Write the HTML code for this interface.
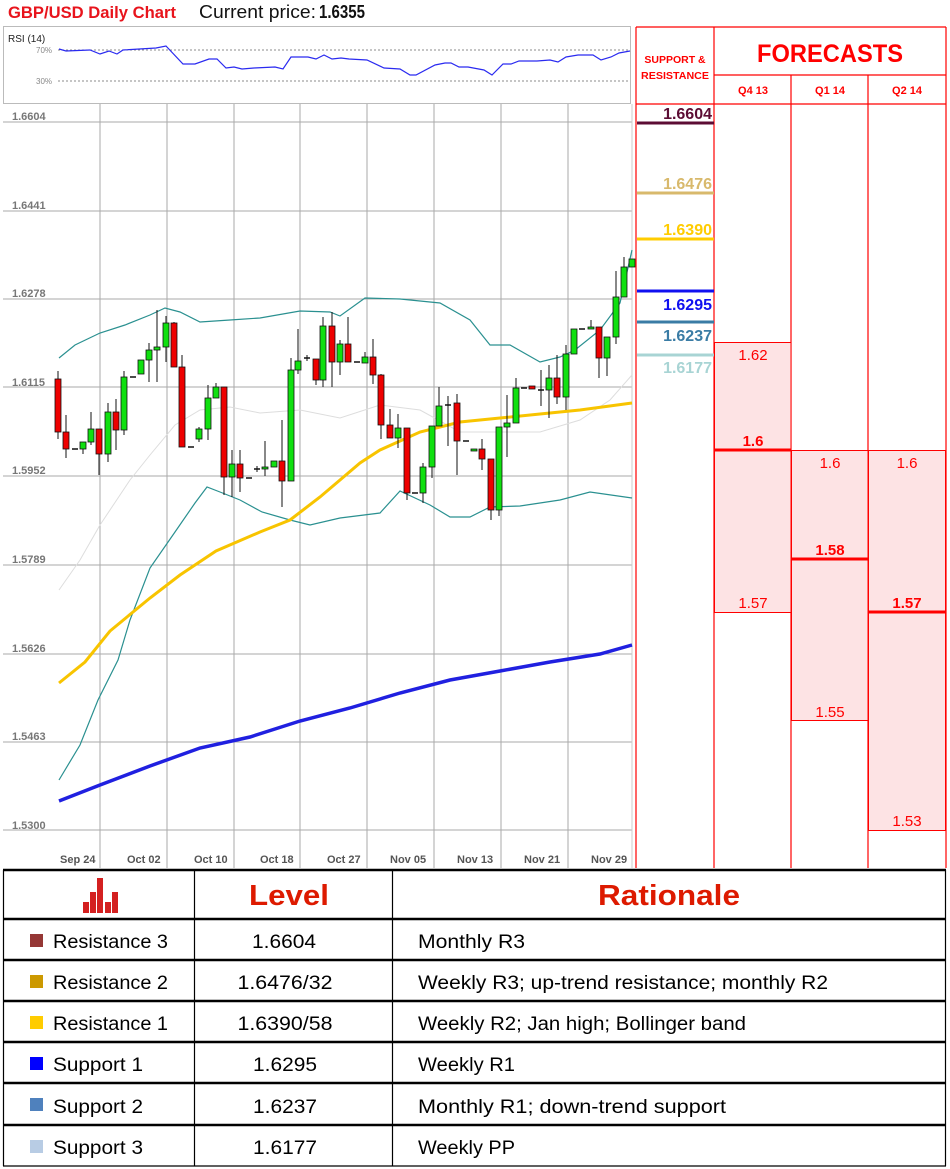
<!DOCTYPE html>
<html><head><meta charset="utf-8"><style>
html,body{margin:0;padding:0;background:#fff;}
svg{display:block;font-family:"Liberation Sans",sans-serif;}
</style></head><body>
<svg id="s" width="950" height="1169" viewBox="0 0 950 1169" xmlns="http://www.w3.org/2000/svg">
<rect width="950" height="1169" fill="#fff"/>
<text x="8" y="18" font-size="17" font-weight="bold" fill="#e8141c" textLength="168" lengthAdjust="spacingAndGlyphs">GBP/USD Daily Chart</text>
<text x="199" y="18" font-size="18" fill="#111" textLength="117" lengthAdjust="spacingAndGlyphs">Current price:</text>
<text x="319" y="18" font-size="18" font-weight="bold" fill="#111" textLength="46" lengthAdjust="spacingAndGlyphs">1.6355</text>
<rect x="3.5" y="26.5" width="627" height="77" fill="#fff" stroke="#bbb"/>
<text x="8" y="42" font-size="10" fill="#222">RSI (14)</text>
<text x="36" y="53" font-size="8" fill="#888">70%</text>
<text x="36" y="84" font-size="8" fill="#888">30%</text>
<line x1="58" y1="50" x2="630" y2="50" stroke="#666" stroke-dasharray="2,2" stroke-width="0.8"/>
<line x1="58" y1="81" x2="630" y2="81" stroke="#666" stroke-dasharray="2,2" stroke-width="0.8"/>
<polyline fill="none" stroke="#2a2af0" stroke-width="1.2" points="59,49 66,51 90,50 100,54 109,51 117,54 123,50 156,48 166,46 183,64 195,64 209,59 217,59 226,68 234,67 242,69 254,68 275,67 283,69 291,57 308,57 316,59 324,55 332,59 341,58 349,59 367,60 384,68 400,69 410,75 416,75 435,65 445,63 451,63 459,67 468,67 484,70 492,75 503,64 511,64 519,61 537,61 550,60 558,62 566,57 578,55 593,55 601,60 611,57 619,53 630,51"/>
<g id="grid" stroke="#aaa" stroke-width="1"></g>
<g font-size="11" fill="#777" font-weight="bold">
<text x="12" y="120">1.6604</text>
<text x="12" y="209">1.6441</text>
<text x="12" y="297">1.6278</text>
<text x="12" y="386">1.6115</text>
<text x="12" y="474">1.5952</text>
<text x="12" y="563">1.5789</text>
<text x="12" y="652">1.5626</text>
<text x="12" y="740">1.5463</text>
<text x="12" y="829">1.5300</text>
</g>
<g font-size="11" fill="#555" font-weight="bold">
<text x="60" y="863">Sep 24</text>
<text x="127" y="863">Oct 02</text>
<text x="194" y="863">Oct 10</text>
<text x="260" y="863">Oct 18</text>
<text x="327" y="863">Oct 27</text>
<text x="390" y="863">Nov 05</text>
<text x="457" y="863">Nov 13</text>
<text x="524" y="863">Nov 21</text>
<text x="591" y="863">Nov 29</text>
</g>
<polyline fill="none" stroke="#ddd" stroke-width="1" points="59,590 80,560 100,525 130,480 150,455 175,425 200,410 230,407 260,413 300,410 340,418 380,405 420,410 460,432 500,432 540,432 580,420 610,400 632,375"/>
<polyline fill="none" stroke="#2a9090" stroke-width="1.2" points="59,358 75,345 100,333 125,325 150,315 165,308 180,312 200,322 230,320 260,318 300,311 330,312 340,316 365,298 400,299 440,303 470,320 490,345 510,345 540,362 560,357 575,350 600,330 620,303 632,250"/>
<polyline fill="none" stroke="#2a9090" stroke-width="1.2" points="59,780 80,745 98,700 118,660 130,620 150,568 175,532 195,503 207,487 220,492 240,500 262,512 290,520 310,525 340,518 380,513 400,491 430,505 450,517 470,517 490,507 520,506 560,500 590,492 632,498"/>
<polyline fill="none" stroke="#f8c400" stroke-width="3" points="59,683 85,662 110,631 150,598 180,575 216,551 260,532 290,520 320,497 340,480 360,463 380,450 420,432 460,422 500,418 540,414 580,410 632,403"/>
<polyline fill="none" stroke="#2020e0" stroke-width="3.5" points="59,801 100,785 150,766 200,748 250,737 300,721 350,708 400,693 450,680 500,671 550,662 600,654 632,645"/>
<g id="candles"></g>
<g stroke="#f00" stroke-width="1.2" fill="none">
<line x1="636" y1="27" x2="946" y2="27"/>
<line x1="636" y1="27" x2="636" y2="868"/>
<line x1="714" y1="27" x2="714" y2="868"/>
<line x1="946" y1="27" x2="946" y2="868"/>
<line x1="714" y1="75" x2="946" y2="75"/>
<line x1="636" y1="104" x2="946" y2="104"/>
<line x1="791" y1="75" x2="791" y2="868"/>
<line x1="868" y1="75" x2="868" y2="868"/>
</g>
<text x="675" y="63" font-size="10.5" font-weight="bold" fill="#f00" text-anchor="middle">SUPPORT &amp;</text>
<text x="675" y="79" font-size="10.5" font-weight="bold" fill="#f00" text-anchor="middle" textLength="68" lengthAdjust="spacingAndGlyphs">RESISTANCE</text>
<text x="830" y="62" font-size="25" font-weight="bold" fill="#f00" text-anchor="middle" textLength="146" lengthAdjust="spacingAndGlyphs">FORECASTS</text>
<g font-size="11" font-weight="bold" fill="#f00" text-anchor="middle">
<text x="753" y="94">Q4 13</text><text x="830" y="94">Q1 14</text><text x="907" y="94">Q2 14</text>
</g>
<g font-size="16" font-weight="bold" text-anchor="end">
<line x1="637" y1="123" x2="714" y2="123" stroke="#5c0c34" stroke-width="3"/>
<text x="712" y="119" fill="#5c0c34">1.6604</text>
<line x1="637" y1="193" x2="714" y2="193" stroke="#d8b96c" stroke-width="3"/>
<text x="712" y="189" fill="#d8b96c">1.6476</text>
<line x1="637" y1="239" x2="714" y2="239" stroke="#ffcc00" stroke-width="3"/>
<text x="712" y="235" fill="#ffcc00">1.6390</text>
<line x1="637" y1="291" x2="714" y2="291" stroke="#1010f0" stroke-width="3"/>
<text x="712" y="310" fill="#1010f0">1.6295</text>
<line x1="637" y1="322" x2="714" y2="322" stroke="#3a7ca5" stroke-width="3"/>
<text x="712" y="341" fill="#3a7ca5">1.6237</text>
<line x1="637" y1="355" x2="714" y2="355" stroke="#a8d4d4" stroke-width="3"/>
<text x="712" y="373" fill="#a8d4d4">1.6177</text>
</g>
<g stroke="#f00" stroke-width="1">
<rect x="714.5" y="342.5" width="76.5" height="270" fill="#fde3e4"/>
<rect x="791.5" y="450.5" width="76.5" height="270" fill="#fde3e4"/>
<rect x="868.5" y="450.5" width="77" height="380" fill="#fde3e4"/>
</g>
<g stroke="#f00" stroke-width="3">
<line x1="714" y1="450" x2="791" y2="450"/>
<line x1="791" y1="559" x2="868" y2="559"/>
<line x1="868" y1="612" x2="946" y2="612"/>
</g>
<g font-size="15" fill="#f00" text-anchor="middle">
<text x="753" y="360">1.62</text>
<text x="753" y="446" font-weight="bold">1.6</text>
<text x="753" y="608">1.57</text>
<text x="830" y="468">1.6</text>
<text x="830" y="555" font-weight="bold">1.58</text>
<text x="830" y="717">1.55</text>
<text x="907" y="468">1.6</text>
<text x="907" y="608" font-weight="bold">1.57</text>
<text x="907" y="826">1.53</text>
</g>
<g stroke="#000" stroke-width="2.5">
<line x1="3" y1="870" x2="946" y2="870"/>
<line x1="3" y1="919" x2="946" y2="919"/>
<line x1="3" y1="960" x2="946" y2="960"/>
<line x1="3" y1="1001" x2="946" y2="1001"/>
<line x1="3" y1="1042" x2="946" y2="1042"/>
<line x1="3" y1="1083" x2="946" y2="1083"/>
<line x1="3" y1="1125" x2="946" y2="1125"/>
</g>
<g stroke="#000" stroke-width="1.2">
<line x1="3.5" y1="870" x2="3.5" y2="1166"/>
<line x1="194.5" y1="870" x2="194.5" y2="1166"/>
<line x1="392.5" y1="870" x2="392.5" y2="1166"/>
<line x1="945.5" y1="870" x2="945.5" y2="1166"/>
<line x1="3" y1="1166" x2="946" y2="1166"/>
</g>
<g fill="#d42020">
<rect x="83" y="902" width="6" height="11"/><rect x="90" y="892" width="6" height="21"/><rect x="97" y="878" width="6" height="35"/><rect x="105" y="902" width="6" height="11"/><rect x="112" y="892" width="6" height="21"/>
</g>
<text x="289" y="905" font-size="29" font-weight="bold" fill="#dd1a00" text-anchor="middle" textLength="80" lengthAdjust="spacingAndGlyphs">Level</text>
<text x="669" y="905" font-size="29" font-weight="bold" fill="#dd1a00" text-anchor="middle" textLength="142" lengthAdjust="spacingAndGlyphs">Rationale</text>
<g>
<rect x="30" y="934" width="13" height="13" fill="#953735"/>
<rect x="30" y="975" width="13" height="13" fill="#cc9900"/>
<rect x="30" y="1016" width="13" height="13" fill="#ffcc00"/>
<rect x="30" y="1057" width="13" height="13" fill="#0000ff"/>
<rect x="30" y="1098" width="13" height="13" fill="#4f81bd"/>
<rect x="30" y="1140" width="13" height="13" fill="#b8cce4"/>
</g>
<g font-size="19" fill="#000">
<text x="53" y="948" textLength="115" lengthAdjust="spacingAndGlyphs">Resistance 3</text>
<text x="53" y="989" textLength="115" lengthAdjust="spacingAndGlyphs">Resistance 2</text>
<text x="53" y="1030" textLength="115" lengthAdjust="spacingAndGlyphs">Resistance 1</text>
<text x="53" y="1071" textLength="90" lengthAdjust="spacingAndGlyphs">Support 1</text>
<text x="53" y="1113" textLength="90" lengthAdjust="spacingAndGlyphs">Support 2</text>
<text x="53" y="1154" textLength="90" lengthAdjust="spacingAndGlyphs">Support 3</text>
</g>
<g font-size="19" fill="#000" text-anchor="middle">
<text x="284" y="948" textLength="64" lengthAdjust="spacingAndGlyphs">1.6604</text>
<text x="285" y="989" textLength="95" lengthAdjust="spacingAndGlyphs">1.6476/32</text>
<text x="285" y="1030" textLength="95" lengthAdjust="spacingAndGlyphs">1.6390/58</text>
<text x="285" y="1071" textLength="64" lengthAdjust="spacingAndGlyphs">1.6295</text>
<text x="285" y="1113" textLength="64" lengthAdjust="spacingAndGlyphs">1.6237</text>
<text x="285" y="1154" textLength="64" lengthAdjust="spacingAndGlyphs">1.6177</text>
</g>
<g font-size="19" fill="#000">
<text x="418" y="948" textLength="107" lengthAdjust="spacingAndGlyphs">Monthly R3</text>
<text x="418" y="989" textLength="410" lengthAdjust="spacingAndGlyphs">Weekly R3; up-trend resistance; monthly R2</text>
<text x="418" y="1030" textLength="328" lengthAdjust="spacingAndGlyphs">Weekly R2; Jan high; Bollinger band</text>
<text x="418" y="1071" textLength="97" lengthAdjust="spacingAndGlyphs">Weekly R1</text>
<text x="418" y="1113" textLength="308" lengthAdjust="spacingAndGlyphs">Monthly R1; down-trend support</text>
<text x="418" y="1154" textLength="97" lengthAdjust="spacingAndGlyphs">Weekly PP</text>
</g>
</svg>
<script>
(function(){
var NS="http://www.w3.org/2000/svg";
var g=document.getElementById("grid");
function ln(p,x1,y1,x2,y2,c,w){var l=document.createElementNS(NS,"line");l.setAttribute("x1",x1);l.setAttribute("y1",y1);l.setAttribute("x2",x2);l.setAttribute("y2",y2);l.setAttribute("stroke",c);l.setAttribute("stroke-width",w);p.appendChild(l);}
[122,211,299,387,476,565,654,742,830].forEach(function(y){ln(g,3,y,632,y,"#aaa",1);});
[100,167,234,300,367,434,501,568].forEach(function(x){ln(g,x,104,x,868,"#aaa",1);});
ln(g,632,104,632,868,"#ccc",1);
var c=[[58,379,432,'r',371,439],[66,432,449,'r',415,458],[75,449,449,'d',449,449],[83,442,449,'g',442,454],[91,429,442,'g',412,445],[99,429,454,'r',429,475],[108,412,454,'g',403,462],[116,412,430,'r',399,450],[124,377,430,'g',371,435],[133,377,377,'d',377,377],[141,360,374,'g',360,374],[149,350,360,'g',343,382],[157,347,350,'g',310,382],[166,323,347,'g',316,362],[174,323,367,'r',322,367],[182,367,447,'r',355,447],[191,447,447,'d',447,447],[199,429,439,'g',427,442],[208,398,429,'g',385,440],[216,387,398,'g',383,398],[224,387,477,'r',387,495],[232,464,477,'g',450,497],[240,464,478,'r',450,492],[249,478,478,'d',478,478],[257,469,469,'d',466,472],[265,467,469,'g',441,476],[274,461,467,'g',461,467],[282,461,481,'r',420,507],[291,370,481,'g',358,481],[298,361,370,'g',329,374],[307,358,358,'d',355,361],[316,359,380,'r',359,385],[323,326,380,'g',317,387],[332,326,362,'r',312,387],[340,344,362,'g',340,375],[348,344,362,'r',317,362],[357,362,362,'d',362,362],[365,357,363,'g',352,363],[373,357,375,'r',339,384],[381,375,425,'r',374,439],[390,425,438,'r',409,438],[398,428,438,'g',414,448],[407,428,493,'r',428,500],[415,493,493,'d',493,493],[423,467,493,'g',463,503],[432,426,467,'g',426,478],[439,406,426,'g',387,426],[448,405,405,'d',396,446],[457,403,441,'r',394,475],[466,441,441,'d',441,441],[474,449,451,'g',449,451],[482,449,459,'r',439,470],[491,459,510,'r',459,520],[499,427,510,'g',427,516],[507,423,427,'g',395,457],[516,388,423,'g',378,423],[524,388,388,'d',388,388],[532,386,389,'r',386,389],[541,390,390,'d',370,406],[549,378,390,'g',365,418],[557,378,397,'r',355,404],[566,354,397,'g',345,410],[574,329,354,'g',329,354],[582,329,329,'d',329,329],[591,327,329,'g',320,329],[599,327,358,'r',327,378],[607,337,358,'g',337,376],[616,297,337,'g',271,344],[624,267,297,'g',257,297],[632,259,267,'g',259,267]];
var cg=document.getElementById("candles");
c.forEach(function(d){
 ln(cg,d[0],d[4],d[0],d[5],"#111",1);
 if(d[3]=='d'){ln(cg,d[0]-3,d[1],d[0]+3,d[1],"#111",1.5);return;}
 var r=document.createElementNS(NS,"rect");
 var h=Math.max(d[2]-d[1],2);
 r.setAttribute("x",d[0]-3);r.setAttribute("y",d[1]);r.setAttribute("width",6);r.setAttribute("height",h);
 r.setAttribute("fill",d[3]=='g'?"#10e010":"#ee0000");r.setAttribute("stroke","#111");r.setAttribute("stroke-width","0.8");
 cg.appendChild(r);
});
})();
</script>
</body></html>
